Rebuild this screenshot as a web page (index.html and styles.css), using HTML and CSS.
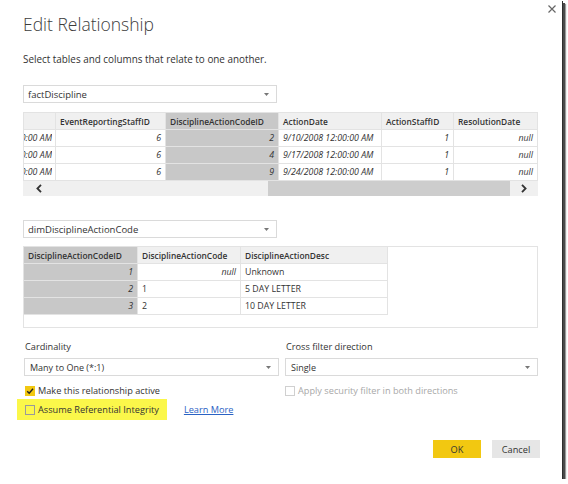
FILE: index.html
```html
<!DOCTYPE html>
<html lang="en">
<head>
    <meta charset="UTF-8">
    <title>Edit Relationship</title>
    <link rel="stylesheet" href="styles.css">
</head>
<body>

<div class="dialog">
    <svg class="close" width="8" height="8" viewBox="0 0 8 8">
        <path d="M0.5 0.5 L7.5 7.5 M7.5 0.5 L0.5 7.5" stroke="#666" stroke-width="1.2" fill="none"/>
    </svg>

    <h1 class="title">Edit Relationship</h1>
    <p class="lead">Select tables and columns that relate to one another.</p>

    <div class="select table-select">
        <span>factDiscipline</span>
        <svg width="5" height="3" viewBox="0 0 5 3"><path d="M0 0 H5 L2.5 3 Z" fill="#777"/></svg>
    </div>

    <div class="grid-wrap">
        <table class="grid fact">
            <colgroup>
                <col style="width:32px"><col style="width:110px"><col style="width:113px">
                <col style="width:103px"><col style="width:72px"><col style="width:84px">
            </colgroup>
            <thead>
                <tr>
                    <th></th>
                    <th>EventReportingStaffID</th>
                    <th class="key">DisciplineActionCodeID</th>
                    <th>ActionDate</th>
                    <th>ActionStaffID</th>
                    <th>ResolutionDate</th>
                </tr>
            </thead>
            <tbody>
                <tr>
                    <td class="cut"><div><span>9/10/2008 12:00:00 AM</span></div></td>
                    <td class="num">6</td>
                    <td class="key num">2</td>
                    <td class="val">9/10/2008 12:00:00 AM</td>
                    <td class="num">1</td>
                    <td class="num">null</td>
                </tr>
                <tr>
                    <td class="cut"><div><span>9/17/2008 12:00:00 AM</span></div></td>
                    <td class="num">6</td>
                    <td class="key num">4</td>
                    <td class="val">9/17/2008 12:00:00 AM</td>
                    <td class="num">1</td>
                    <td class="num">null</td>
                </tr>
                <tr>
                    <td class="cut"><div><span>9/24/2008 12:00:00 AM</span></div></td>
                    <td class="num">6</td>
                    <td class="key num">9</td>
                    <td class="val">9/24/2008 12:00:00 AM</td>
                    <td class="num">1</td>
                    <td class="num">null</td>
                </tr>
            </tbody>
        </table>
        <div class="hscroll">
            <div class="scroll-btn">
                <svg width="6" height="9" viewBox="0 0 6 9"><path d="M5 0.8 L1.4 4.5 L5 8.2" stroke="#333" stroke-width="1.8" fill="none"/></svg>
            </div>
            <div class="track"><div class="thumb"></div></div>
            <div class="scroll-btn right">
                <svg width="6" height="9" viewBox="0 0 6 9"><path d="M1 0.8 L4.6 4.5 L1 8.2" stroke="#333" stroke-width="1.8" fill="none"/></svg>
            </div>
        </div>
    </div>

    <div class="select table-select second">
        <span>dimDisciplineActionCode</span>
        <svg width="5" height="3" viewBox="0 0 5 3"><path d="M0 0 H5 L2.5 3 Z" fill="#777"/></svg>
    </div>

    <div class="grid-box">
        <table class="grid dim">
            <colgroup>
                <col style="width:114px"><col style="width:103px"><col style="width:147px">
            </colgroup>
            <thead>
                <tr>
                    <th class="key">DisciplineActionCodeID</th>
                    <th>DisciplineActionCode</th>
                    <th>DisciplineActionDesc</th>
                </tr>
            </thead>
            <tbody>
                <tr>
                    <td class="key num">1</td>
                    <td class="num">null</td>
                    <td>Unknown</td>
                </tr>
                <tr>
                    <td class="key num">2</td>
                    <td>1</td>
                    <td>5 DAY LETTER</td>
                </tr>
                <tr>
                    <td class="key num">3</td>
                    <td>2</td>
                    <td>10 DAY LETTER</td>
                </tr>
            </tbody>
        </table>
    </div>

    <div class="options">
        <div class="field">
            <label>Cardinality</label>
            <div class="select">
                <span>Many to One (*:1)</span>
                <svg width="5" height="3" viewBox="0 0 5 3"><path d="M0 0 H5 L2.5 3 Z" fill="#777"/></svg>
            </div>
            <div class="check">
                <svg class="box" width="10" height="10" viewBox="0 0 10 10">
                    <rect width="10" height="10" fill="#f2c811"/>
                    <path d="M2.2 5.2 L4.2 7.2 L8 2.8" stroke="#222" stroke-width="1.4" fill="none"/>
                </svg>
                <span>Make this relationship active</span>
            </div>
            <div class="check-line">
                <div class="check marked">
                    <span class="box empty"></span>
                    <span>Assume Referential Integrity</span>
                </div>
                <a class="link" href="#">Learn More</a>
            </div>
        </div>
        <div class="field">
            <label>Cross filter direction</label>
            <div class="select">
                <span>Single</span>
                <svg width="5" height="3" viewBox="0 0 5 3"><path d="M0 0 H5 L2.5 3 Z" fill="#777"/></svg>
            </div>
            <div class="check disabled">
                <span class="box empty"></span>
                <span>Apply security filter in both directions</span>
            </div>
        </div>
    </div>

    <div class="buttons">
        <button class="btn primary">OK</button>
        <button class="btn">Cancel</button>
    </div>
</div>

</body>
</html>
```

FILE: styles.css
```css
body {
    margin: 0;
    background: #fff;
}
.dialog {
    position: relative;
    width: 562px;
    height: 479px;
    box-sizing: border-box;
    padding: 0 24px 0 23px;
    background: #fff;
    box-shadow: 1px 1px 0 #2e2e2e, 3px 3px 0 #4a4a4a, 4px 4px 1px #9a9a9a;
    font-family: "Open Sans", "Noto Sans", sans-serif;
    color: #333;
}
.close {
    position: absolute;
    top: 5px;
    right: 6px;
}
.title {
    margin: 0;
    padding-top: 9px;
    font-size: 17.5px;
    font-weight: 300;
    line-height: 30px;
    color: #3c3c3c;
}
.lead {
    margin: 11px 0 0;
    font-size: 9.9px;
    line-height: 18px;
}
.select {
    height: 18px;
    box-sizing: border-box;
    border: 1px solid #dadada;
    display: flex;
    align-items: center;
    justify-content: space-between;
    padding: 0 7px 0 4px;
    font-size: 9px;
    background: #fff;
}
.table-select {
    width: 254px;
    margin-top: 17px;
    font-size: 9.5px;
}
.table-select.second {
    margin-top: 24px;
}
.grid-wrap {
    width: 515px;
    margin-top: 9px;
    overflow: hidden;
}
.grid {
    border-collapse: collapse;
    table-layout: fixed;
    font-size: 8.8px;
    white-space: nowrap;
}
.grid.fact {
    width: 514px;
}
.grid.dim {
    width: 364px;
}
.grid th,
.grid td {
    height: 16px;
    padding: 0 4px;
    border: 1px solid #e3e3e3;
    overflow: hidden;
    text-align: left;
}
.grid th {
    background: #f0f0f0;
    font-weight: 600;
    font-size: 8.4px;
}
.grid .key {
    background: #c8c8c8;
}
.grid .num {
    text-align: right;
    font-style: italic;
}
.grid .val {
    font-style: italic;
}
.grid .cut {
    padding: 0 3px 0 0;
    font-style: italic;
}
.cut div {
    display: flex;
    justify-content: flex-end;
    overflow: hidden;
}
.hscroll {
    display: flex;
    height: 15px;
    background: #f0f0f0;
}
.scroll-btn {
    width: 32px;
    display: flex;
    align-items: center;
    justify-content: center;
}
.scroll-btn.right {
    width: 28px;
}
.track {
    flex: 1;
    display: flex;
    justify-content: flex-end;
}
.thumb {
    width: 242px;
    background: #cdcdcd;
}
.grid-box {
    height: 82px;
    margin-top: 8px;
    box-sizing: border-box;
    border: 1px solid #e3e3e3;
}
.grid-box .grid {
    margin: -1px 0 0 -1px;
}
.options {
    display: grid;
    grid-template-columns: 256px 254px;
    column-gap: 5px;
    margin-top: 11px;
}
.field label {
    display: block;
    font-size: 9.2px;
    line-height: 16px;
    margin-left: 2px;
}
.field .select {
    height: 18px;
    margin-top: 3px;
    margin-left: 1px;
    padding-left: 5px;
}
.check {
    display: flex;
    align-items: center;
    height: 17px;
    margin-top: 6px;
    padding-left: 2px;
    font-size: 9.2px;
}
.check .box {
    width: 10px;
    height: 10px;
    margin-right: 3px;
    flex: none;
}
.box.empty {
    box-sizing: border-box;
    border: 1px solid #9a9a9a;
}
.check.disabled {
    color: #a8a8a8;
    padding-left: 1px;
}
.check.disabled .box.empty {
    border-color: #d0d0d0;
}
.check-line {
    display: flex;
    align-items: center;
    margin-top: 0;
}
.check.marked {
    height: 21px;
    margin: 0 0 0 -6px;
    padding: 0 8px 0 8px;
    background: #fbf74a;
}
.link {
    margin-left: 17px;
    font-size: 9.2px;
    color: #2a62c4;
}
.buttons {
    display: flex;
    justify-content: flex-end;
    gap: 11px;
    margin: 20px -2px 0 0;
}
.btn {
    width: 48px;
    height: 18px;
    border: 0;
    padding: 0;
    background: #e6e6e6;
    font-family: inherit;
    font-size: 9.2px;
    color: #333;
}
.btn.primary {
    background: #f2c811;
}
```
